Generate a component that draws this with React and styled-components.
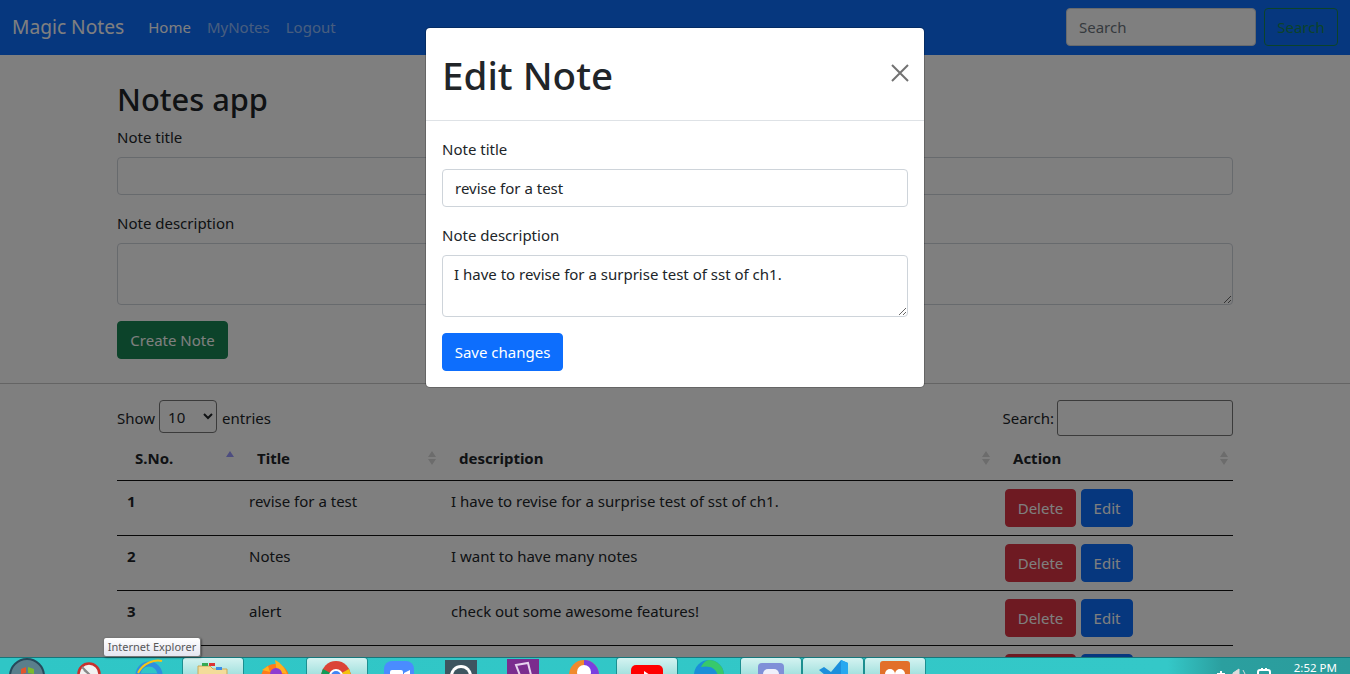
import React from 'react';
import styled, { createGlobalStyle } from 'styled-components';

const GlobalStyle = createGlobalStyle`
  * { box-sizing: border-box; }
  html, body { margin: 0; padding: 0; height: 100%; overflow: hidden; }
  body {
    font-family: "Noto Sans", "Open Sans", sans-serif;
    font-size: 15px;
    line-height: 24px;
    color: #212529;
    background: #fff;
  }
`;

const Screen = styled.div`
  width: 1350px;
  height: 674px;
  display: flex;
  flex-direction: column;
  overflow: hidden;
  position: relative;
`;

const Browser = styled.div`
  height: 657px;
  flex: none;
  overflow: hidden;
  position: relative;
`;

const Navbar = styled.nav`
  height: 55px;
  background: #0d6efd;
  display: flex;
  align-items: center;
  padding: 0 12px 1px;
`;

const Brand = styled.span`
  font-size: 19.2px;
  color: #fff;
  margin-right: 16px;
`;

const NavLinks = styled.div`
  display: flex;
  flex: 1;
`;

const NavLink = styled.a`
  padding: 0 8px;
  color: ${(p) => (p.$active ? '#fff' : 'rgba(255, 255, 255, 0.55)')};
`;

const SearchForm = styled.form`
  display: flex;
  gap: 8px;
`;

const Input = styled.input`
  display: block;
  width: ${(p) => p.$width || '100%'};
  height: 38px;
  padding: 6px 12px;
  font: inherit;
  color: #212529;
  background: #fff;
  border: 1px solid #ced4da;
  border-radius: 4px;
  &::placeholder { color: #6c757d; opacity: 1; }
`;

const Textarea = styled.textarea`
  display: block;
  width: 100%;
  height: 62px;
  padding: 6px 11px;
  font: inherit;
  color: #212529;
  background: #fff;
  border: 1px solid #ced4da;
  border-radius: 4px;
`;

const Button = styled.button`
  height: 38px;
  padding: 0;
  width: ${(p) => p.$width || 'auto'};
  font: inherit;
  white-space: nowrap;
  color: ${(p) => p.$text || '#fff'};
  background: ${(p) => p.$bg || 'transparent'};
  border: 1px solid ${(p) => p.$border || p.$bg || 'transparent'};
  border-radius: 4px;
`;

const Container = styled.div`
  width: 1116px;
  margin: 0 auto;
`;

const NoteForm = styled(Container)`
  padding: 24px 0;
`;

const Heading = styled.h2`
  margin: 0 0 8px;
  padding-top: 1px;
  height: 38.4px;
  font-size: 30.8px;
  line-height: 38.4px;
  font-weight: 500;
`;

const Field = styled.div`
  margin-bottom: 16px;
`;

const Label = styled.label`
  display: block;
  margin-bottom: 8px;
`;

const Rule = styled.hr`
  margin: 0 0 16px;
  border: 0;
  border-top: 1px solid #c9c9c9;
`;

const TableTop = styled.div`
  height: 36px;
  display: flex;
  justify-content: space-between;
  align-items: center;
`;

const Inline = styled.label`
  display: flex;
  align-items: center;
  gap: ${(p) => p.$gap || 3}px;
`;

const EntriesSelect = styled.select`
  width: 58px;
  height: 33px;
  margin: 0 1px 3px 0;
  padding: 0 0 0 4px;
  font: inherit;
  color: #212529;
  background: #fff;
  border: 1px solid #767676;
  border-radius: 4px;
`;

const FilterInput = styled(Input)`
  border-color: #767676;
  height: 36px;
  width: 176px;
  border-radius: 3px;
`;

const Table = styled.table`
  width: 1116px;
  table-layout: fixed;
  border-collapse: collapse;
`;

const Th = styled.th`
  width: ${(p) => p.$width};
  height: 44px;
  padding: 0 4px 0 18px;
  text-align: left;
  border-bottom: 1px solid #111;
`;

const ThInner = styled.div`
  display: flex;
  justify-content: space-between;
  align-items: center;
`;

const SortArrows = styled.span`
  display: flex;
  flex-direction: column;
  gap: 2px;
  width: 10px;
  align-items: center;
`;

const Arrow = styled.i`
  width: 0;
  height: 0;
  border-left: 4px solid transparent;
  border-right: 4px solid transparent;
  ${(p) => (p.$down ? 'border-top' : 'border-bottom')}: 6px solid ${(p) => p.$color || '#d8d8d8'};
`;

const Td = styled.td`
  padding: 8px 10px;
  height: 55px;
  vertical-align: top;
  border-bottom: 1px solid #111;
  font-weight: ${(p) => (p.$bold ? 700 : 400)};
`;

const Actions = styled.div`
  display: flex;
  gap: 5px;
`;

const Backdrop = styled.div`
  position: absolute;
  inset: 0;
  background: rgba(0, 0, 0, 0.5);
`;

const Modal = styled.div`
  width: 500px;
  margin: 27px auto 0;
  background: #fff;
  background-clip: padding-box;
  border: 1px solid rgba(0, 0, 0, 0.2);
  border-radius: 5px;
`;

const ModalHeader = styled.div`
  height: 93px;
  padding: 16px;
  display: flex;
  justify-content: space-between;
  align-items: center;
  border-bottom: 1px solid #dee2e6;
`;

const ModalTitle = styled.h1`
  margin: 2px 0 0;
  font-size: 38.6px;
  line-height: 58px;
  font-weight: 500;
`;

const CloseButton = styled.button`
  width: 32px;
  height: 32px;
  padding: 7px;
  margin: -2px -8px 0 0;
  border: 0;
  background: none;
  opacity: 0.55;
  display: flex;
`;

const ModalBody = styled.div`
  padding: 16px;
`;

const Taskbar = styled.footer`
  height: 17px;
  flex: none;
  position: relative;
  display: flex;
  gap: 2px;
  overflow: hidden;
  padding-left: 59px;
  border-top: 1px solid #16767a;
  background: linear-gradient(90deg, #2fc6c6 0%, #34c8c8 86.5%, #2b9f9f 90.5%, #2b9c9c 100%);
`;

const StartOrb = styled.svg`
  position: absolute;
  left: 9px;
  top: 0;
`;

const TaskSlot = styled.div`
  width: 60px;
  height: 40px;
  flex: none;
  display: flex;
  justify-content: center;
  padding-top: ${(p) => p.$top}px;
  border-radius: 3px 3px 0 0;
  ${(p) =>
    p.$open &&
    `background: linear-gradient(180deg, #d4f3f1 0%, #8ed9d6 60%, #60cfcc 100%);
     box-shadow: 0 0 0 1px #1c8f90;`}
`;

const Tray = styled.div`
  position: absolute;
  right: 13px;
  top: 0;
  display: flex;
  align-items: flex-start;
  gap: 20px;
  color: #fff;
`;

const TrayIcons = styled.svg`
  margin-top: 10px;
`;

const Clock = styled.span`
  font-size: 11.5px;
  line-height: 14px;
  margin-top: 3px;
`;

const Tooltip = styled.div`
  position: absolute;
  left: 103px;
  top: 637px;
  width: 98px;
  height: 20px;
  font-size: 11px;
  line-height: 18px;
  text-align: center;
  color: #575757;
  background: linear-gradient(180deg, #fff, #e4e5f0);
  border: 1px solid #767676;
  border-radius: 3px;
  box-shadow: 1px 1px 2px rgba(0, 0, 0, 0.4);
`;

const notes = [
  { id: 1, title: 'revise for a test', description: 'I have to revise for a surprise test of sst of ch1.' },
  { id: 2, title: 'Notes', description: 'I want to have many notes' },
  { id: 3, title: 'alert', description: 'check out some awesome features!' },
  { id: 4, title: '', description: '' },
];

const columns = [
  { name: 'S.No.', width: '122px', sorted: true },
  { name: 'Title', width: '202px' },
  { name: 'description', width: '554px' },
  { name: 'Action', width: '238px' },
];

const icons = [
  // snipping tool
  { key: 'snip', top: 4, node: <><circle cx="16" cy="12" r="10.5" fill="#f2f2f2" stroke="#c9302c" strokeWidth="2.5" /><path d="M9 5l14 14M11 8l11 9" stroke="#888" strokeWidth="2" /></> },
  // internet explorer
  { key: 'ie', top: 1, node: <><circle cx="14" cy="16" r="11" fill="none" stroke="#2f8fe0" strokeWidth="5" /><path d="M3 14C8 4 20 0 27 2" fill="none" stroke="#f5c518" strokeWidth="2" /><path d="M6 16h16" stroke="#2f8fe0" strokeWidth="3" /></> },
  // explorer
  { key: 'folder', top: 2, open: true, node: <><path d="M1 6h12l3 3h14v24H1z" fill="#f3dc9a" stroke="#c9aa5a" /><rect x="5" y="3" width="6" height="3" fill="#35a853" /><rect x="12" y="3" width="6" height="3" fill="#d33" /><rect x="19" y="7" width="6" height="3" fill="#3a8ee6" /></> },
  // firefox
  { key: 'firefox', top: 2, node: <><circle cx="16" cy="18" r="14" fill="#ff7a1a" /><path d="M16 0c6 3 10 8 12 14L18 12z" fill="#ffb01f" /><circle cx="17" cy="14" r="6" fill="#8f3bd1" /><path d="M3 10l6-4 2 6z" fill="#ffb01f" /></> },
  // chrome
  { key: 'chrome', top: 2, open: true, node: <><circle cx="15" cy="16" r="15" fill="#db4437" /><path d="M15 16L28 9a15 15 0 0 1-6 20z" fill="#f4c20d" /><path d="M15 16L2 9a15 15 0 0 0 6 20z" fill="#0f9d58" /><circle cx="15" cy="16" r="7" fill="#fff" /><circle cx="15" cy="16" r="5" fill="#4285f4" /></> },
  // zoom
  { key: 'zoom', top: 2, node: <><rect x="1" y="1" width="30" height="30" rx="8" fill="#4a8cff" /><rect x="7" y="10" width="13" height="12" rx="2" fill="#fff" /><path d="M21 13l6-3v12l-6-3z" fill="#fff" /></> },
  // whatsapp
  { key: 'whatsapp', top: 2, node: <><rect y="0" width="32" height="32" fill="#3e5560" /><circle cx="16" cy="16" r="11" fill="#fff" /><circle cx="16" cy="16" r="8" fill="#3e5560" /></> },
  // purple app
  { key: 'purple', top: 0, node: <><rect y="1" width="32" height="32" fill="#7b2d8e" /><path d="M9 7l12-2 3 12-10 3z" fill="none" stroke="#e7d4ee" strokeWidth="2" /></> },
  // browser
  { key: 'orb', top: 1, node: <><circle cx="15" cy="16" r="15" fill="#f08a2c" /><path d="M15 1a15 15 0 0 1 15 15H15z" fill="#7a3fe0" /><circle cx="15" cy="13" r="7" fill="#fff" /></> },
  // youtube
  { key: 'youtube', top: 0, open: true, node: <><rect y="7" width="32" height="24" rx="5" fill="#f00" /><path d="M13 13l9 6-9 6z" fill="#fff" /></> },
  // edge
  { key: 'edge', top: 1, node: <><circle cx="16" cy="16" r="15" fill="#1a8fd8" /><path d="M16 1a15 15 0 0 1 15 15c0 3-4 4-6 2C24 10 18 6 8 8c2-4 5-7 8-7z" fill="#37c96b" /></> },
  // chat app
  { key: 'chat', top: 1, open: true, node: <><rect x="3" y="4" width="26" height="28" rx="4" fill="#7f90d8" /><rect x="8" y="10" width="16" height="12" rx="5" fill="#eef0fb" /></> },
  // vs code
  { key: 'vscode', top: 0, open: true, node: <><path d="M2 12l5-3 7 5L24 2l7 3v24l-7 3-10-11-7 5-5-3 6-6z" fill="#1c8fdc" /><path d="M24 2l7 3v24l-7 3z" fill="#27a8f0" /></> },
  // owl app
  { key: 'owl', top: 1, open: true, node: <><rect x="1" y="2" width="30" height="30" rx="3" fill="#e2702a" /><circle cx="11" cy="15" r="5" fill="#fff" /><circle cx="21" cy="15" r="5" fill="#fff" /></> },
];

function App() {
  return (
    <Screen>
      <GlobalStyle />
      <Browser>
        <Navbar>
          <Brand>Magic Notes</Brand>
          <NavLinks>
            <NavLink $active>Home</NavLink>
            <NavLink>MyNotes</NavLink>
            <NavLink>Logout</NavLink>
          </NavLinks>
          <SearchForm>
            <Input $width="190px" placeholder="Search" />
            <Button $width="74px" $text="#198754" $border="#198754">Search</Button>
          </SearchForm>
        </Navbar>

        <NoteForm>
          <Heading>Notes app</Heading>
          <Field>
            <Label>Note title</Label>
            <Input />
          </Field>
          <Field>
            <Label>Note description</Label>
            <Textarea />
          </Field>
          <Button $width="111px" $bg="#198754">Create Note</Button>
        </NoteForm>
        <Rule />

        <Container>
          <TableTop>
            <Inline $gap={4}>
              Show
              <EntriesSelect defaultValue="10">
                <option>10</option>
              </EntriesSelect>
              entries
            </Inline>
            <Inline>
              Search:
              <FilterInput />
            </Inline>
          </TableTop>
          <Table>
            <thead>
              <tr>
                {columns.map((col) => (
                  <Th key={col.name} $width={col.width}>
                    <ThInner>
                      {col.name}
                      <SortArrows>
                        <Arrow $color={col.sorted ? '#9a9aff' : undefined} />
                        <Arrow $down $color={col.sorted ? '#ffffff' : undefined} />
                      </SortArrows>
                    </ThInner>
                  </Th>
                ))}
              </tr>
            </thead>
            <tbody>
              {notes.map((note) => (
                <tr key={note.id}>
                  <Td $bold>{note.id}</Td>
                  <Td>{note.title}</Td>
                  <Td>{note.description}</Td>
                  <Td>
                    <Actions>
                      <Button $width="71px" $bg="#dc3545">Delete</Button>
                      <Button $width="52px" $bg="#0d6efd">Edit</Button>
                    </Actions>
                  </Td>
                </tr>
              ))}
            </tbody>
          </Table>
        </Container>

        <Backdrop>
          <Modal>
            <ModalHeader>
              <ModalTitle>Edit Note</ModalTitle>
              <CloseButton aria-label="Close">
                <svg width="18" height="18" viewBox="0 0 18 18">
                  <path d="M1 1l16 16M17 1L1 17" stroke="#000" strokeWidth="2" />
                </svg>
              </CloseButton>
            </ModalHeader>
            <ModalBody>
              <Field>
                <Label>Note title</Label>
                <Input defaultValue="revise for a test" />
              </Field>
              <Field>
                <Label>Note description</Label>
                <Textarea defaultValue="I have to revise for a surprise test of sst of ch1." />
              </Field>
              <Button $width="121px" $bg="#0d6efd">Save changes</Button>
            </ModalBody>
          </Modal>
        </Backdrop>
      </Browser>

      <Taskbar>
        <StartOrb width="38" height="38" viewBox="0 0 38 38">
          <circle cx="18" cy="18" r="17" fill="#5a7f8c" stroke="#27495a" strokeWidth="2" />
          <path d="M12 11l5-2v6l-5 1z" fill="#e2562d" />
          <path d="M19 9l6 2v5l-6-1z" fill="#7cba2d" />
        </StartOrb>
        {icons.map((icon) => (
          <TaskSlot key={icon.key} $top={icon.top} $open={icon.open}>
            <svg width="32" height="34" viewBox="0 0 32 34">{icon.node}</svg>
          </TaskSlot>
        ))}
        <Tray>
          <TrayIcons width="66" height="8" viewBox="0 0 66 8">
            <path d="M9 6h8M13 3v5" stroke="#fff" strokeWidth="2" />
            <path d="M25 5l6-4v7h-6zM35 2l3 6" fill="#ddd" stroke="#ddd" />
            <rect x="50" y="2" width="12" height="8" rx="2" fill="none" stroke="#fff" strokeWidth="2" />
            <path d="M54 0v3M58 0v3" stroke="#fff" strokeWidth="2" />
          </TrayIcons>
          <Clock>2:52 PM</Clock>
        </Tray>
      </Taskbar>
      <Tooltip>Internet Explorer</Tooltip>
    </Screen>
  );
}

export default App;
